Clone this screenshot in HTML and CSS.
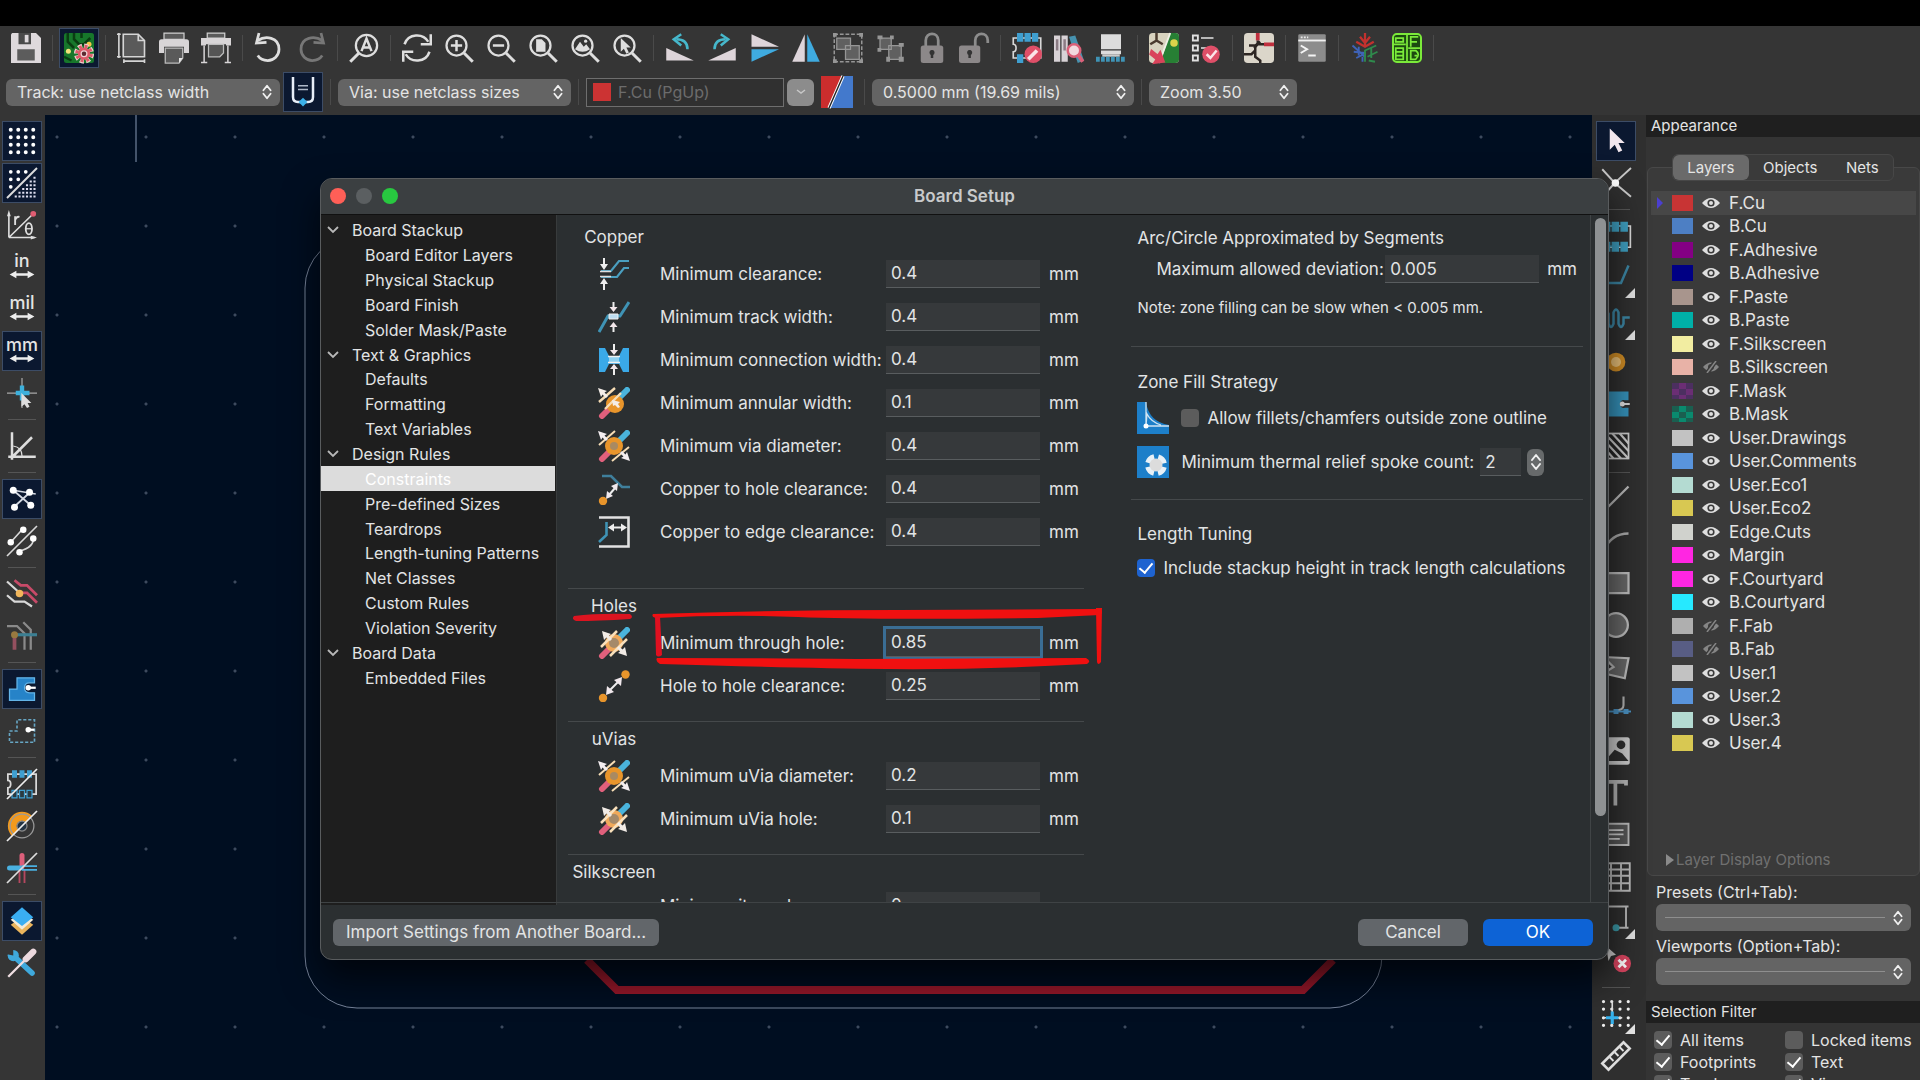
FILE: index.html
```html
<!DOCTYPE html>
<html lang="en">
<head>
<meta charset="utf-8">
<title>PCB Editor - Board Setup</title>
<link rel="stylesheet" href="styles.css">
</head>
<body>
<svg class="defs" width="0" height="0" aria-hidden="true">
  <symbol id="updown" viewBox="0 0 12 20"><path d="M2 8l4-5 4 5M2 12l4 5 4-5" fill="none" stroke="#f0f0f0" stroke-width="2" stroke-linecap="round" stroke-linejoin="round"/></symbol>
  <symbol id="eye" viewBox="0 0 18 12"><path d="M0 6Q9-4 18 6Q9 16 0 6z" fill="#dedede"/><circle cx="9" cy="6" r="3.6" fill="#3a3a3a"/><circle cx="9" cy="6" r="2" fill="#dedede"/></symbol>
  <symbol id="eye-off" viewBox="0 0 18 12"><path d="M1 6Q9-3 17 6Q9 15 1 6z" fill="#858585"/><circle cx="9" cy="6" r="3" fill="#3a3a3a"/><path d="M3 13L13-1M6 13L16-1" stroke="#3a3a3a" stroke-width="2"/><path d="M5 12L14 0" stroke="#858585" stroke-width="1.5"/></symbol>
  <symbol id="lens" viewBox="0 0 24 24"><circle cx="10" cy="10" r="8" fill="none" stroke="#dedede" stroke-width="1.8"/><path d="M16 16l7 7" stroke="#dedede" stroke-width="2.4"/></symbol>
  <symbol id="chev" viewBox="0 0 12 8"><path d="M1 1l5 5 5-5" fill="none" stroke="#b8b8b8" stroke-width="1.8"/></symbol>
  <symbol id="span" viewBox="0 0 24 8"><path d="M1 4l6-3.4v2.2h10V.6L23 4l-6 3.4V5.200H7v2.200z" fill="#ededed"/></symbol>
  <symbol id="via" viewBox="0 0 32 32"><path d="M4 29L12 21" stroke="#e0607c" stroke-width="6" stroke-linecap="round"/><path d="M20 12L29 3" stroke="#4ab4dc" stroke-width="6" stroke-linecap="round"/><circle cx="16" cy="16" r="9" fill="#e8952b"/><circle cx="16" cy="16" r="4" fill="#a98a62"/><path d="M1 15L17 1M14 31L31 17" stroke="#f7ddb5" stroke-width="2"/><path d="M0 1l9 3-2.500 1.500 3.500 3.500-2 2-3.500-3.500L3 10zM32 31l-9-3 2.500-1.500-3.500-3.500 2-2 3.500 3.500L29 22z" fill="#f4eef0"/></symbol>
  <symbol id="hole" viewBox="0 0 32 32"><path d="M4 29L12 21" stroke="#e0607c" stroke-width="6" stroke-linecap="round"/><path d="M20 12L29 3" stroke="#4ab4dc" stroke-width="6" stroke-linecap="round"/><circle cx="16" cy="16" r="9" fill="#f0a95a"/><circle cx="16" cy="16" r="5" fill="#a58a6a"/><path d="M3 20L19 4M12 29L29 12" stroke="#f9e0bb" stroke-width="2.500"/><path d="M4 4l9 3-2 1.500 3 3.500-2 2-3.500-3.500L6 13zM29 29l-9-3 2-1.500-3-3.500 2-2 3.500 3.500L27 20z" fill="#f2ece6"/></symbol>
</svg>

<header class="chrome">
  <div class="bar" role="toolbar" aria-label="Main">
    <button class="tool" aria-label="Save"><svg viewBox="0 0 24 24"><path d="M1 0h19l4 4v20H0V1z" fill="#ded9dc"/><path d="M6 0h10v9H6z" fill="#4a4a4a"/><path d="M11 1.500h3v6h-3z" fill="#ded9dc"/><path d="M5 13h14v9H5z" fill="#5c5c5c"/></svg></button>
    <i class="sep"></i>
    <button class="tool on" aria-label="Board setup"><svg viewBox="0 0 24 24"><rect width="24" height="24" rx="2" fill="#17772b"/><path d="M3 0v7l5 5M8 0v5l4 4h4l5-5M0 19l6 3M14 0v4" stroke="#0a3d12" stroke-width="2" fill="none"/><circle cx="3.500" cy="14.500" r="2" fill="#f3e17a"/><circle cx="20" cy="9" r="2" fill="#f3c54a"/><circle cx="16" cy="16.500" r="5.800" fill="none" stroke="#eed0d2" stroke-width="4.500" stroke-dasharray="3 1.550"/><circle cx="16" cy="16.500" r="5.800" fill="none" stroke="#dc5a68" stroke-width="2.500" stroke-dasharray="2.200 2.350" stroke-dashoffset="-.400"/><circle cx="16" cy="16.500" r="4.900" fill="#dc5a68"/><circle cx="16" cy="16.500" r="2.300" fill="#5c2a30" stroke="#f0d0d4"/></svg></button>
    <i class="sep"></i>
    <button class="tool" aria-label="Page settings"><svg viewBox="0 0 24 24"><path d="M5 1h12l5 5v13H5z" fill="#5a5a5a" stroke="#d5d5d5" stroke-width="1.300"/><path d="M17 1v5h5M1.500 0v20M0 1h3M0 19h3M5 22.500h17M5.500 21v3M22 21v3" stroke="#d5d5d5" stroke-width="1.300" fill="none"/></svg></button>
    <button class="tool" aria-label="Print"><svg viewBox="0 0 24 24"><path d="M4 0h16v5H4z" fill="#5a5a5a" stroke="#cfcfcf"/><path d="M2 5h20q2 0 2 2v9h-4v-5H4v5H0V7q0-2 2-2z" fill="#d8d5d7"/><path d="M5 12h14v8l-3 4H5z" fill="#5a5a5a" stroke="#bcbcbc"/><path d="M16 24v-4h3z" fill="#e6e6e6"/></svg></button>
    <button class="tool" aria-label="Plot"><svg viewBox="0 0 24 24"><path d="M5 0h14v4H5z" fill="#5a5a5a" stroke="#cfcfcf"/><path d="M0 4h24v6h-4v-1H4v1H0z" fill="#d8d5d7"/><path d="M6 9h12v7l-3 3H6z" fill="#555" stroke="#bcbcbc"/><path d="M2.500 10v13M21.500 10v13M0 23.500h5M19 23.500h5" stroke="#d8d5d7" stroke-width="1.200"/></svg></button>
    <i class="sep"></i>
    <button class="tool" aria-label="Undo"><svg viewBox="0 0 24 24"><path d="M3 6C9 2 20 3 20 13c0 5-4 9-9 9-4 0-6-1-8-4" fill="none" stroke="#dedede" stroke-width="2.200"/><path d="M4 0L2 8l8-.5" fill="none" stroke="#dedede" stroke-width="2.200"/></svg></button>
    <button class="tool" aria-label="Redo"><svg viewBox="0 0 24 24"><g transform="matrix(-1 0 0 1 24 0)" fill="none" stroke="#777" stroke-width="2.200"><path d="M3 6C9 2 20 3 20 13c0 5-4 9-9 9-4 0-6-1-8-4M4 0L2 8l8-.5"/></g></svg></button>
    <i class="sep"></i>
    <button class="tool" aria-label="Find"><svg viewBox="0 0 24 24"><circle cx="14" cy="10" r="8.500" fill="none" stroke="#dedede" stroke-width="1.800"/><path d="M8 16l-7 7" stroke="#dedede" stroke-width="2.400"/><path d="M10 14.500L14 4.500l4 10M11.500 11.500h5" fill="none" stroke="#dedede" stroke-width="2"/></svg></button>
    <i class="sep"></i>
    <button class="tool" aria-label="Refresh"><svg viewBox="0 0 24 24"><path d="M2 9C5 0 17 0 21 7M22 15c-3 9-15 9-19 2" fill="none" stroke="#dedede" stroke-width="2"/><path d="M23 1v8h-8M1 23v-8h8" fill="none" stroke="#dedede" stroke-width="2"/></svg></button>
    <button class="tool" aria-label="Zoom in"><svg viewBox="0 0 24 24"><use href="#lens"/><path d="M10 5.500v9M5.500 10h9" stroke="#dedede" stroke-width="2"/></svg></button>
    <button class="tool" aria-label="Zoom out"><svg viewBox="0 0 24 24"><use href="#lens"/><path d="M5.500 10h9" stroke="#dedede" stroke-width="2"/></svg></button>
    <button class="tool" aria-label="Zoom to page"><svg viewBox="0 0 24 24"><use href="#lens"/><path d="M6.500 5h4.500l3 3v7H6.500z" fill="#dedede"/></svg></button>
    <button class="tool" aria-label="Zoom to objects"><svg viewBox="0 0 24 24"><use href="#lens"/><path d="M4 13l4-6 3 4 2-2 3 4q-6 4-12 0z" fill="#dedede"/><circle cx="12.500" cy="6.500" r="1.300" fill="#dedede"/></svg></button>
    <button class="tool" aria-label="Zoom to selection"><svg viewBox="0 0 24 24"><use href="#lens"/><path d="M7 4v11l2.500-2.500 2 4 2-1-2-4H15z" fill="#dedede"/></svg></button>
    <i class="sep"></i>
    <button class="tool" aria-label="Rotate counterclockwise"><svg viewBox="0 0 24 24"><path d="M1 12v10h22z" fill="#ded5da"/><path d="M18 13c0-5-3-8-9-8" fill="none" stroke="#46b8cc" stroke-width="2"/><path d="M13 1L7 5l6 5" fill="none" stroke="#46b8cc" stroke-width="2"/></svg></button>
    <button class="tool" aria-label="Rotate clockwise"><svg viewBox="0 0 24 24"><path d="M23 12v10H1z" fill="#ded5da"/><path d="M6 13c0-5 3-8 9-8" fill="none" stroke="#46b8cc" stroke-width="2"/><path d="M11 1l6 4-6 5" fill="none" stroke="#46b8cc" stroke-width="2"/></svg></button>
    <button class="tool" aria-label="Flip vertically"><svg viewBox="0 0 24 24"><path d="M2 1v10h22z" fill="#ded5da"/><path d="M2 23V13h22z" fill="#3fabe0"/></svg></button>
    <button class="tool" aria-label="Flip horizontally"><svg viewBox="0 0 24 24"><path d="M1 23h10V1z" fill="#ded5da"/><path d="M23 23H13V1z" fill="#3fabe0"/></svg></button>
    <button class="tool" aria-label="Group"><svg viewBox="0 0 24 24"><path d="M1 1h22v22H1z" fill="none" stroke="#969696" stroke-width="1.200" stroke-dasharray="3 1.500"/><path d="M3 4h11v9H3zM10 10h11v11H10z" fill="#606060" stroke="#969696"/><path d="M0 0h3v3H0zM21 0h3v3h-3zM0 21h3v3H0zM21 21h3v3h-3z" fill="#969696"/></svg></button>
    <button class="tool" aria-label="Ungroup"><svg viewBox="0 0 24 24"><path d="M4 4h9v9H4zM11 10h10v11H11z" fill="#606060" stroke="#969696"/><path d="M2 2h4v3H2zM12 2h3v3h-3zM2 12h3v3H2zM19 8h4v3h-4zM9 19h3v4H9zM19 19h4v4h-4z" fill="#969696"/></svg></button>
    <button class="tool" aria-label="Lock"><svg viewBox="0 0 24 24"><path d="M7 11V6c0-7 10-7 10 0v5" fill="none" stroke="#8c8c8c" stroke-width="2.200"/><rect x="3" y="10" width="18" height="14" rx="2" fill="#8c8889"/><path d="M12 14v6" stroke="#333" stroke-width="2"/><circle cx="12" cy="15.500" r="2" fill="#333"/></svg></button>
    <button class="tool" aria-label="Unlock"><svg viewBox="0 0 24 24"><path d="M13 11V6c0-7 10-7 10 0v2" fill="none" stroke="#8c8c8c" stroke-width="2.200"/><rect x="0" y="10" width="17" height="14" rx="2" fill="#8c8889"/><path d="M8.500 14v6" stroke="#333" stroke-width="2"/><circle cx="8.500" cy="15.500" r="2" fill="#333"/></svg></button>
    <i class="sep"></i>
    <button class="tool" aria-label="Footprint editor"><svg viewBox="0 0 24 24"><path d="M1 4h22v16H1v-5c3 0 3-6 0-6z" fill="none" stroke="#d8d8d8" stroke-width="1.300"/><path d="M4 0h5v7H4zM10 0h5v7h-5zM16 0h5v7h-5zM4 17h5v7H4z" fill="#3f9fd0"/><circle cx="17" cy="17" r="7" fill="#df4f68"/><path d="M13 21l7-7" stroke="#fbe4e8" stroke-width="3"/></svg></button>
    <button class="tool" aria-label="Footprint library"><svg viewBox="0 0 24 24"><path d="M0 2h5v21H0zM6 2h5v21H6z" fill="#d8d2d6"/><path d="M1.500 5h2v9h-2zM7.500 5h2v9h-2z" fill="#8b7c84"/><path d="M12 3l5-1 7 20-5 2z" fill="#4793b0"/><circle cx="16" cy="14" r="5" fill="#f2d9df" stroke="#db6078" stroke-width="2"/><path d="M19 17l4 6" stroke="#db6078" stroke-width="3"/></svg></button>
    <button class="tool" aria-label="3D viewer"><svg viewBox="0 0 24 24"><path d="M4 1h16v12H4zM4 14h16v3H4z" fill="#dcdcdc"/><path d="M5 18h14" stroke="#ccc" stroke-width="2"/><path d="M0 21h24" stroke="#3f93b5" stroke-width="4" stroke-dasharray="3 1"/></svg></button>
    <i class="sep"></i>
    <button class="tool" aria-label="Update PCB"><svg viewBox="0 0 24 24"><rect width="24" height="24" rx="3" fill="#d8d3bf"/><path d="M17 0h4q3 0 3 3v18q0 3-3 3H9z" fill="#277f34"/><path d="M17 0L8 24" stroke="#f0f0e6" stroke-width="1.500"/><path d="M6 0v6l-5 3M6 6l5 3" stroke="#4a3b2e" stroke-width="2" fill="none"/><circle cx="20" cy="8" r="3" fill="#dcd34b"/><path d="M2 14l5 4 2-3 3 8-8 1 2-3-5-4z" fill="#d9445b" stroke="#d9445b" stroke-width="1.500"/></svg></button>
    <button class="tool" aria-label="Design rules check"><svg viewBox="0 0 24 24"><path d="M1.500 2h4v4h-4zM1.500 10h4v4h-4zM1.500 18h4v4h-4z" fill="none" stroke="#e0e0e0" stroke-width="1.500"/><path d="M8 4h10M8 12h5" stroke="#b8b8b8" stroke-width="1.500"/><circle cx="16" cy="17" r="7" fill="#df4f68"/><path d="M12.500 17l3 3 5-6" fill="none" stroke="#fbe4e8" stroke-width="2"/></svg></button>
    <i class="sep"></i>
    <button class="tool" aria-label="Schematic editor"><svg viewBox="0 0 24 24"><rect width="24" height="24" rx="3" fill="#dbd6ca"/><path d="M0 17h6l3-3v-4l4-3M9 14v5l4 3v2M9 10H4" stroke="#2c2522" stroke-width="2" fill="none"/><path d="M11 0v6M16 9h8" stroke="#c0303f" stroke-width="3" fill="none"/><path d="M11 6v3l-3 3M11 9h5" stroke="#2c2522" stroke-width="2" fill="none"/></svg></button>
    <i class="sep"></i>
    <button class="tool" aria-label="Scripting console"><svg viewBox="0 0 24 24"><rect x="1" y="1" width="22" height="22" rx="1" fill="#8c8c8c"/><path d="M1 6h22" stroke="#f0f0f0" stroke-width="1.500"/><path d="M3 3.500h6" stroke="#e8e8e8" stroke-width="1.500" stroke-dasharray="1.500 1"/><path d="M3 10l5 3-5 3M9 18h6" fill="none" stroke="#f4f4f4" stroke-width="1.600"/></svg></button>
    <i class="sep"></i>
    <button class="tool" aria-label="Plugin"><svg viewBox="0 0 24 24"><path d="M12 0v10M8 3l4 5 4-5M5 7l7 4 7-4" stroke="#c3312e" stroke-width="1.800" fill="none"/><path d="M2 10l10 9M3 15l9 1M7 11v7M10 19v4M5 20l6-3" stroke="#3f63b8" stroke-width="1.500" fill="none"/><path d="M12 23v-9l9-4M14 19l8-4M17 12v8M15 22l5 1" stroke="#2f8a4c" stroke-width="1.500" fill="none"/></svg></button>
    <button class="tool" aria-label="Bill of materials"><svg viewBox="0 0 24 24"><rect x=".8" y=".8" width="22.400" height="22.400" rx="3" fill="#1c4a10" stroke="#7bea3a" stroke-width="1.600"/><path d="M12 1v22M1 9h10M13 12h10M3 4h6v3H3zM3 12h6v9H3zM3 15h6M3 18h6M15 11V3h6M15 7h5M15 14h4q4 3 0 7h-4zM18 18h2" stroke="#7bea3a" stroke-width="1.400" fill="none"/></svg></button>
    <i class="sep"></i>
  </div>
  <div class="bar options">
    <span class="pick track"><select aria-label="Track width"><option>Track: use netclass width</option></select><svg><use href="#updown"/></svg></span>
    <button class="tool on" aria-label="Auto track width"><svg viewBox="0 0 24 24"><path d="M4 0v16q0 4 4 4h8q4 0 4-4V0" fill="none" stroke="#e8eef8" stroke-width="2"/><path d="M8 7h8M8 10h8" stroke="#aeb8c8" stroke-width="1.300"/><path d="M12 16.500l3.500 3.500-3.500 3.500L8.500 20z" fill="#3cb0e8"/></svg></button>
    <i class="sep"></i>
    <span class="pick via"><select aria-label="Via size"><option>Via: use netclass sizes</option></select><svg><use href="#updown"/></svg></span>
    <i class="sep"></i>
    <span class="layerbox"><i class="chip"></i><input aria-label="Active layer" value="F.Cu (PgUp)" disabled></span>
    <button class="drop" aria-label="Choose layer"><svg viewBox="0 0 12 8"><path d="M2 2l4 3 4-3" fill="none" stroke="#c8c8c8" stroke-width="1.500"/></svg></button>
    <button class="tool" aria-label="Layer pair"><svg class="pair" viewBox="0 0 24 24"><path d="M0 0h17L6 24H0z" fill="#cc2d2d"/><path d="M17 0h7v24H6z" fill="#4379cc"/><path d="M16.500 0L6 24" stroke="#fff" stroke-width="2.400"/><path d="M16.500 0L6 24" stroke="#222"/></svg></button>
    <i class="sep"></i>
    <span class="pick grid"><select aria-label="Grid"><option>0.5000 mm (19.69 mils)</option></select><svg><use href="#updown"/></svg></span>
    <i class="sep"></i>
    <span class="pick zoom"><select aria-label="Zoom"><option>Zoom 3.50</option></select><svg><use href="#updown"/></svg></span>
  </div>
</header>

<main class="workspace">
  <div class="side" role="toolbar" aria-label="Display">
    <button class="tool on" aria-label="Show grid"><svg viewBox="0 0 24 24"><path d="M3 3h20M3 9h20M3 15h20M3 21h20" stroke="#fff" stroke-width="3.200" stroke-linecap="round" stroke-dasharray="0 6"/></svg></button>
    <button class="tool on" aria-label="Grid overrides"><svg viewBox="0 0 24 24"><path d="M3 3h13M3 9h7M3 15h1" stroke="#fff" stroke-width="3" stroke-linecap="round" stroke-dasharray="0 6"/><path d="M0 24L24 0" stroke="#ddd" stroke-width="1.500"/><path d="M22 7v17M19 10v14M16 13v11M13 16v8M10 19v5M7 22v2" stroke="#dde" stroke-width="1.700" stroke-dasharray="1.600 1.400"/></svg></button>
    <button class="tool" aria-label="Polar coordinates"><svg viewBox="0 0 24 24"><path d="M1.500 22V3M1.500 22H22M1.500 22L21 3" stroke="#dedede" stroke-width="1.300"/><path d="M0 5l1.500-5L3 5zM19 20.500l5 1.500-5 1.500z" fill="#dedede"/><circle cx="21" cy="3" r="2.300" fill="#df5d72"/><path d="M6.500 12V5M6.500 8q1-3 3.500-2.500" stroke="#dedede" stroke-width="1.500" fill="none"/><ellipse cx="17.500" cy="15" rx="2.500" ry="4.500" fill="none" stroke="#dedede" stroke-width="1.500"/><path d="M15 15h5" stroke="#dedede"/></svg></button>
    <button class="tool unit">in<svg><use href="#span"/></svg></button>
    <button class="tool unit">mil<svg><use href="#span"/></svg></button>
    <button class="tool unit on">mm<svg><use href="#span"/></svg></button>
    <button class="tool" aria-label="Cursor shape"><svg viewBox="0 0 24 24"><path d="M12 0v24M0 12h24" stroke="#a8a8a8" stroke-width="1"/><path d="M12 6v12M7 12h11" stroke="#3cb0dc" stroke-width="3.500"/><path d="M11.500 12v11l2.500-2 2 3 2-1-1.500-3h3z" fill="#ddd"/></svg></button>
    <i class="sep"></i>
    <button class="tool" aria-label="Angle snap"><svg viewBox="0 0 24 24"><path d="M4 1v22M1 20.500h22M3 22L20 5" stroke="#dedede" stroke-width="2"/><path d="M5 12q7 1 7 8" stroke="#dedede" fill="none"/></svg></button>
    <i class="sep"></i>
    <button class="tool on" aria-label="Ratsnest"><svg viewBox="0 0 24 24"><path d="M5 5l18 3M5 5l14 12M6 18L18 7" stroke="#d5d9e2" stroke-width="1.400"/><g fill="#fff"><circle cx="5" cy="5" r="2.800"/><circle cx="18" cy="6.500" r="2.800"/><circle cx="6" cy="18.500" r="2.800"/><circle cx="19" cy="17" r="2.800"/></g></svg></button>
    <button class="tool" aria-label="Curved ratsnest"><svg viewBox="0 0 24 24"><path d="M0 24L24 0M3 13L12 3M21 9q1 8-11 11" stroke="#d8d8d8" stroke-width="1.300" fill="none"/><g fill="#fff"><circle cx="3" cy="13" r="2.600"/><circle cx="13" cy="3" r="2.600"/><circle cx="21" cy="10" r="2.600"/><circle cx="10" cy="21" r="2.600"/></g></svg></button>
    <i class="sep"></i>
    <button class="tool" aria-label="Net highlight"><svg viewBox="0 0 24 24"><path d="M0 2l10 9M0 13l6 5h8l6 4" stroke="#d8d8d8" stroke-width="1.800" fill="none"/><path d="M6 1l5 4h5l8 8M10 11h6l8 8" stroke="#c74a68" stroke-width="2.200" fill="none"/><circle cx="10" cy="11.500" r="3" fill="#f1b65a"/></svg></button>
    <button class="tool" aria-label="Net colors"><svg viewBox="0 0 24 24"><path d="M0 4h8l6 6v13M13 1l6 6v16" stroke="#8a8a8a" stroke-width="1.800" fill="none"/><path d="M6 12v11" stroke="#94505f" stroke-width="3"/><path d="M8 11h16" stroke="#3c7f93" stroke-width="2.500"/><circle cx="6" cy="11" r="2.800" fill="#99793f"/></svg></button>
    <i class="sep"></i>
    <button class="tool on" aria-label="Show zone fill"><svg viewBox="0 0 24 24"><path d="M2 12h6V3h14v4h-4q-4 0-4 4t4 4h4v6H2z" fill="#2683c8" stroke="#63b4e8"/><circle cx="17" cy="11" r="2.200" fill="#fff"/><path d="M17 11h6" stroke="#fff" stroke-width="1.800"/></svg></button>
    <button class="tool" aria-label="Show zone outlines"><svg viewBox="0 0 24 24"><path d="M2 12h6V3h14v18H2z" fill="none" stroke="#67a6c4" stroke-width="1.300" stroke-dasharray="2.500 1.500"/><circle cx="17" cy="11" r="2.200" fill="#fff"/><path d="M17 11h5" stroke="#fff" stroke-width="1.800"/></svg></button>
    <i class="sep"></i>
    <button class="tool" aria-label="Footprint outlines"><svg viewBox="0 0 24 24"><path d="M.700 4h22.600v16H.700v-5c3 0 3-6 0-6z" fill="none" stroke="#d8d8d8" stroke-width="1.400"/><path d="M4 1h4v6H4zM10 1h4v6h-4zM16 1h4v6h-4z" fill="#3f9fd0"/><path d="M4 17h4v6H4zM10 17h4v6h-4zM16 17h4v6h-4z" fill="#2b3a40" stroke="#3f9fd0"/><path d="M0 24L24 0" stroke="#eee" stroke-width="1.400"/></svg></button>
    <button class="tool" aria-label="Via outlines"><svg viewBox="0 0 24 24"><path d="M4 20A10 10 0 0 1 20 4L15 9a4 4 0 0 0-6 6z" fill="#f39a1d"/><circle cx="12" cy="12" r="9.500" fill="none" stroke="#9a9a9a"/><circle cx="12" cy="12" r="4" fill="#243444" stroke="#888"/><path d="M0 24L24 0" stroke="#eee" stroke-width="1.400"/></svg></button>
    <button class="tool" aria-label="Track outlines"><svg viewBox="0 0 24 24"><path d="M12 2v9" stroke="#dc5f7a" stroke-width="4" stroke-linecap="round"/><path d="M10 13v11M14 13v11" stroke="#b5475f" stroke-width="1.500"/><path d="M2 12h9" stroke="#4ab0e0" stroke-width="4" stroke-linecap="round"/><path d="M12 10.500h12M12 13.500h12" stroke="#4ab0e0" stroke-width="1.300"/><path d="M0 24L24 0" stroke="#ddd" stroke-width="1.400"/></svg></button>
    <i class="sep"></i>
    <button class="tool on" aria-label="Appearance panel"><svg viewBox="0 0 24 24"><path d="M3 15l9-6 9 6-9 8z" fill="#eab45c"/><path d="M3 11l9-6 9 6-9 8z" fill="#f2ead8"/><path d="M3 9l9-8 9 8-9 7z" fill="#3aaef2"/></svg></button>
    <button class="tool" aria-label="Preferences"><svg viewBox="0 0 24 24"><path d="M6 7l14 13" stroke="#3fa9dc" stroke-width="4.500" stroke-linecap="round"/><circle cx="5" cy="6" r="4.500" fill="#3fa9dc"/><path d="M0 0h5v6l-5-1z" fill="#353535"/><path d="M1 23L15 9" stroke="#f0dfe3" stroke-width="1.800"/><path d="M15 9l6-6" stroke="#ecd9de" stroke-width="5" stroke-linecap="round"/></svg></button>
  </div>

  <div class="canvas">
    <svg class="board" aria-label="Board outline and tracks">
      <path d="M91 0v47" stroke="#43536a" stroke-width="2"/>
      <rect x="260" y="121" width="1077" height="772" rx="52" fill="none" stroke="#77839a"/>
      <path d="M542 845l30 30h686l30-30" fill="none" stroke="#951729" stroke-width="8"/>
    </svg>
  </div>

  <div class="side right" role="toolbar" aria-label="Drawing">
    <button class="tool on" aria-label="Select"><svg viewBox="0 0 24 24"><path d="M7 2v17l4-4 3 6 3-1.500-3-6h5z" fill="#f2e7ee"/></svg></button>
    <button class="tool" aria-label="Local ratsnest"><svg viewBox="0 0 24 24"><path d="M1 1l10 11L24 0M11 12l13 11M11 12L2 22" stroke="#c8c8c8" stroke-width="1.500" fill="none"/><circle cx="11.500" cy="12" r="3" fill="#fff"/></svg></button>
    <i class="sep"></i>
    <button class="tool" aria-label="Place footprint"><svg viewBox="0 0 24 24"><path d="M1 4h22.500v17H1" fill="none" stroke="#d8d8d8" stroke-width="1.300"/><path d="M3 1h4v7H3zM9 1h5v7H9zM16 1h5v7h-5zM3 17h4v7H3zM9 17h5v7H9zM16 17h5v7h-5zM3 4h18M3 20h18" fill="#3f9fc0" stroke="#3f9fc0"/></svg></button>
    <button class="tool more" aria-label="Route tracks"><svg viewBox="0 0 24 24"><path d="M2 16h14L22 2" fill="none" stroke="#3c86a4" stroke-width="2"/></svg></button>
    <button class="tool more" aria-label="Tune length"><svg viewBox="0 0 24 24"><path d="M2 15V7q2-5 4 0v8q2 5 4 0V6q2-5 4 0v9q2 5 4 0v-5h5" fill="none" stroke="#3c86a4" stroke-width="2"/></svg></button>
    <button class="tool" aria-label="Add via"><svg viewBox="0 0 24 24"><circle cx="12" cy="12" r="7.500" fill="#cf8c25"/><circle cx="12" cy="12" r="4" fill="#e8bf78"/></svg></button>
    <button class="tool" aria-label="Add zone"><svg viewBox="0 0 24 24"><path d="M2 2h20v7h-3q-3-1-4 3 1 4 4 3h3v7H2z" fill="#3590b8"/><circle cx="17" cy="12" r="2" fill="#ddd"/><path d="M17 12h6" stroke="#ddd" stroke-width="1.500"/></svg></button>
    <button class="tool" aria-label="Add rule area"><svg viewBox="0 0 24 24"><rect x="3" y="2" width="19" height="20" fill="#262626" stroke="#ccc" stroke-width="1.400"/><path d="M3 2l19 20M9 2l13 14M15 2l7 8M3 8l13 14M3 14l7 8" stroke="#ccc" stroke-width="1.700"/></svg></button>
    <i class="sep"></i>
    <button class="tool" aria-label="Draw line"><svg viewBox="0 0 24 24"><path d="M2 22L22 2" stroke="#bbb" stroke-width="1.800"/></svg></button>
    <button class="tool" aria-label="Draw arc"><svg viewBox="0 0 24 24"><path d="M2 20Q8 6 22 6" fill="none" stroke="#aaa" stroke-width="2"/></svg></button>
    <button class="tool" aria-label="Draw rectangle"><svg viewBox="0 0 24 24"><path d="M2 4h20v16H2z" fill="#666" stroke="#bbb" stroke-width="1.800"/></svg></button>
    <button class="tool" aria-label="Draw circle"><svg viewBox="0 0 24 24"><circle cx="12" cy="12" r="9.500" fill="#666" stroke="#bbb" stroke-width="1.800"/></svg></button>
    <button class="tool" aria-label="Draw polygon"><svg viewBox="0 0 24 24"><path d="M2 4l20 1-3 16-17-4 8-5z" fill="#666" stroke="#bbb" stroke-width="1.800"/></svg></button>
    <button class="tool" aria-label="Draw curve"><svg viewBox="0 0 24 24"><path d="M18 2v7q0 4-6 4" fill="none" stroke="#b0b0b0" stroke-width="1.700"/><path d="M2 14h22" stroke="#4a90c0" stroke-width="1.500"/><path d="M10 12h4v4h-4zM18 12h4v4h-4z" fill="#4a90c0"/></svg></button>
    <button class="tool" aria-label="Add image"><svg viewBox="0 0 24 24"><rect x="1" y="1" width="22" height="22" rx="2" fill="#c9c9c9"/><circle cx="16" cy="7" r="3.500" fill="#2e2e2e"/><path d="M3 20l8-9 6 3 5 6z" fill="#2e2e2e"/></svg></button>
    <button class="tool" aria-label="Add text"><svg viewBox="0 0 24 24"><path d="M3 3h17v3M11.500 3v19M3 6V3" fill="none" stroke="#b5b5b5" stroke-width="3"/></svg></button>
    <button class="tool" aria-label="Add text box"><svg viewBox="0 0 24 24"><path d="M2 3h20v17H2z" fill="#555" stroke="#bbb" stroke-width="1.500"/><path d="M5 8h13M5 11.500h13M5 15h10" stroke="#ccc" stroke-width="1.400"/></svg></button>
    <button class="tool" aria-label="Add table"><svg viewBox="0 0 24 24"><path d="M1 1h22v22H1zM1 6h22M1 11h22M1 17h22M8 1v22M16 1v22" fill="none" stroke="#bbb" stroke-width="1.500"/></svg></button>
    <button class="tool more" aria-label="Add dimension"><svg viewBox="0 0 24 24"><path d="M2 2h20M20 2v17M12 19h10" stroke="#bbb" stroke-width="1.500" fill="none"/><circle cx="12" cy="19" r="2.800" fill="#3c9aa8"/></svg></button>
    <button class="tool" aria-label="Delete"><svg viewBox="0 0 24 24"><path d="M4 0l8 7-4 1-2 4z" fill="#ccc"/><circle cx="17" cy="14" r="7" fill="#d94560"/><path d="M14 11l6 6M20 11l-6 6" stroke="#fff" stroke-width="2.200"/></svg></button>
    <i class="sep"></i>
    <button class="tool more" aria-label="Grid origin"><svg viewBox="0 0 24 24"><path d="M2 2h20M2 8h20M2 15h20M2 21h20" stroke="#eee" stroke-width="2.600" stroke-linecap="round" stroke-dasharray="0 6.600"/><path d="M9 2v20M3 15h14" stroke="#ddd" stroke-width="1.300"/><path d="M9 10v10M4 15h10" stroke="#35b0ea" stroke-width="2.500"/></svg></button>
    <button class="tool" aria-label="Measure"><svg viewBox="0 0 24 24"><path d="M1 18L18 1l5 5L6 23z" fill="none" stroke="#dedede" stroke-width="2"/><path d="M7 13l3 3M11 9l3 3M15 5l3 3" stroke="#dedede" stroke-width="1.500"/></svg></button>
  </div>

  <aside class="panel">
    <h2 class="caption">Appearance</h2>
    <div class="tabs" role="tablist"><button class="tab current" role="tab">Layers</button><button class="tab" role="tab">Objects</button><button class="tab" role="tab">Nets</button></div>
    <div class="group">
      <ul class="layers">
        <li class="active"><i class="chip fcu"></i><button aria-label="Toggle"><svg><use href="#eye"/></svg></button>F.Cu</li>
        <li><i class="chip bcu"></i><button aria-label="Toggle"><svg><use href="#eye"/></svg></button>B.Cu</li>
        <li><i class="chip fadh"></i><button aria-label="Toggle"><svg><use href="#eye"/></svg></button>F.Adhesive</li>
        <li><i class="chip badh"></i><button aria-label="Toggle"><svg><use href="#eye"/></svg></button>B.Adhesive</li>
        <li><i class="chip fpaste"></i><button aria-label="Toggle"><svg><use href="#eye"/></svg></button>F.Paste</li>
        <li><i class="chip bpaste"></i><button aria-label="Toggle"><svg><use href="#eye"/></svg></button>B.Paste</li>
        <li><i class="chip fsilk"></i><button aria-label="Toggle"><svg><use href="#eye"/></svg></button>F.Silkscreen</li>
        <li><i class="chip bsilk"></i><button aria-label="Toggle"><svg><use href="#eye-off"/></svg></button>B.Silkscreen</li>
        <li><i class="chip fmask"></i><button aria-label="Toggle"><svg><use href="#eye"/></svg></button>F.Mask</li>
        <li><i class="chip bmask"></i><button aria-label="Toggle"><svg><use href="#eye"/></svg></button>B.Mask</li>
        <li><i class="chip gray"></i><button aria-label="Toggle"><svg><use href="#eye"/></svg></button>User.Drawings</li>
        <li><i class="chip blue"></i><button aria-label="Toggle"><svg><use href="#eye"/></svg></button>User.Comments</li>
        <li><i class="chip mint"></i><button aria-label="Toggle"><svg><use href="#eye"/></svg></button>User.Eco1</li>
        <li><i class="chip gold"></i><button aria-label="Toggle"><svg><use href="#eye"/></svg></button>User.Eco2</li>
        <li><i class="chip edge"></i><button aria-label="Toggle"><svg><use href="#eye"/></svg></button>Edge.Cuts</li>
        <li><i class="chip pink"></i><button aria-label="Toggle"><svg><use href="#eye"/></svg></button>Margin</li>
        <li><i class="chip pink"></i><button aria-label="Toggle"><svg><use href="#eye"/></svg></button>F.Courtyard</li>
        <li><i class="chip cyan"></i><button aria-label="Toggle"><svg><use href="#eye"/></svg></button>B.Courtyard</li>
        <li><i class="chip ffab"></i><button aria-label="Toggle"><svg><use href="#eye-off"/></svg></button>F.Fab</li>
        <li><i class="chip bfab"></i><button aria-label="Toggle"><svg><use href="#eye-off"/></svg></button>B.Fab</li>
        <li><i class="chip gray"></i><button aria-label="Toggle"><svg><use href="#eye"/></svg></button>User.1</li>
        <li><i class="chip blue"></i><button aria-label="Toggle"><svg><use href="#eye"/></svg></button>User.2</li>
        <li><i class="chip mint"></i><button aria-label="Toggle"><svg><use href="#eye"/></svg></button>User.3</li>
        <li><i class="chip gold"></i><button aria-label="Toggle"><svg><use href="#eye"/></svg></button>User.4</li>
      </ul>
      <button class="reveal"><svg viewBox="0 0 8 12"><path d="M0 0l8 6-8 6z" fill="#8a8a8a"/></svg>Layer Display Options</button>
    </div>
    <div class="views">
      <label for="presets">Presets (Ctrl+Tab):</label>
      <span class="pick blank"><select id="presets"><option></option></select><hr><svg><use href="#updown"/></svg></span>
      <label for="viewports">Viewports (Option+Tab):</label>
      <span class="pick blank"><select id="viewports"><option></option></select><hr><svg><use href="#updown"/></svg></span>
    </div>
    <h2 class="caption">Selection Filter</h2>
    <div class="filter">
      <label><input type="checkbox" checked>All items</label>
      <label><input type="checkbox">Locked items</label>
      <label><input type="checkbox" checked>Footprints</label>
      <label><input type="checkbox" checked>Text</label>
      <label><input type="checkbox" checked>Tracks</label>
      <label><input type="checkbox" checked>Vias</label>
    </div>
  </aside>
</main>

<section class="dialog" role="dialog" aria-labelledby="dlg-title">
  <header class="titlebar">
    <span class="lights"><button class="close" aria-label="Close"></button><button class="min" aria-label="Minimize" disabled></button><button class="max" aria-label="Zoom"></button></span>
    <h1 id="dlg-title">Board Setup</h1>
  </header>
  <div class="pages">
    <nav class="tree">
      <a href="#stackup" class="branch"><svg><use href="#chev"/></svg>Board Stackup</a>
      <a href="#layers">Board Editor Layers</a>
      <a href="#physical">Physical Stackup</a>
      <a href="#finish">Board Finish</a>
      <a href="#mask">Solder Mask/Paste</a>
      <a href="#text" class="branch"><svg><use href="#chev"/></svg>Text &amp; Graphics</a>
      <a href="#defaults">Defaults</a>
      <a href="#formatting">Formatting</a>
      <a href="#variables">Text Variables</a>
      <a href="#rules" class="branch"><svg><use href="#chev"/></svg>Design Rules</a>
      <a href="#constraints" class="selected">Constraints</a>
      <a href="#sizes">Pre-defined Sizes</a>
      <a href="#teardrops">Teardrops</a>
      <a href="#tuning">Length-tuning Patterns</a>
      <a href="#classes">Net Classes</a>
      <a href="#custom">Custom Rules</a>
      <a href="#severity">Violation Severity</a>
      <a href="#data" class="branch"><svg><use href="#chev"/></svg>Board Data</a>
      <a href="#files">Embedded Files</a>
    </nav>
    <div class="form">
      <div class="col rules">
        <section class="copper">
          <h3>Copper</h3>
          <div class="rule"><svg viewBox="0 0 32 32"><path d="M3 13h10l8-10h10M3 19h16l7-9h5" fill="none" stroke="#4a9fc0" stroke-width="2.200"/><path d="M2 13.500h11M2 18.500h11" stroke="#ddd" stroke-width="1.500"/><path d="M6 0v7M6 32v-7" stroke="#eee" stroke-width="2"/><path d="M2 6h8l-4 6zM2 26h8l-4-6z" fill="#eee"/></svg><label for="clr">Minimum clearance:</label><input id="clr" value="0.4"><span>mm</span></div>
          <div class="rule"><svg viewBox="0 0 32 32"><path d="M1 31L10 15h12L31 1" fill="none" stroke="#3f93b5" stroke-width="3"/><path d="M11 13h9v5h-9z" fill="#bcdcf0" stroke="#eee"/><path d="M15.500 1v7M15.500 31v-7" stroke="#eee" stroke-width="2"/><path d="M11.500 6h8l-4 5zM11.500 26h8l-4-5z" fill="#f2e6ea"/></svg><label for="trk">Minimum track width:</label><input id="trk" value="0.4"><span>mm</span></div>
          <div class="rule"><svg viewBox="0 0 32 32"><path d="M1 4h6l4 8h10l4-8h6v24h-6l-4-8H11l-4 8H1z" fill="#3aa9e8"/><path d="M11 13h10v5H11z" fill="#8fd0f0"/><path d="M10 12.500h12M10 18.500h12" stroke="#f0f0f0" stroke-width="1.500"/><path d="M16 0v7M16 31v-7" stroke="#eee" stroke-width="2"/><path d="M12 6h8l-4 5zM12 25h8l-4-5z" fill="#f2e6ea"/></svg><label for="con">Minimum connection width:</label><input id="con" value="0.4"><span>mm</span></div>
          <div class="rule"><svg viewBox="0 0 32 32"><path d="M4 29L12 21" stroke="#e0607c" stroke-width="6" stroke-linecap="round"/><path d="M20 12L29 3" stroke="#4ab4dc" stroke-width="6" stroke-linecap="round"/><circle cx="17" cy="17" r="9" fill="#e8952b"/><path d="M1 15L17 1M7 22L23 6" stroke="#f7ddb5" stroke-width="2.400"/><path d="M0 1l9 3-2.500 1.500 3.500 3.500-2 2-3.500-3.500L3 10zM14 13l8 2-2 2 2 3-2 1-3-3-2 1z" fill="#f4ede8"/></svg><label for="ann">Minimum annular width:</label><input id="ann" value="0.1"><span>mm</span></div>
          <div class="rule"><svg><use href="#via"/></svg><label for="dia">Minimum via diameter:</label><input id="dia" value="0.4"><span>mm</span></div>
          <div class="rule"><svg viewBox="0 0 32 32"><path d="M4 3h9l11 11h8" fill="none" stroke="#3f7f9c" stroke-width="2.600"/><path d="M11 22l6-7" stroke="#eee" stroke-width="2"/><path d="M20 10l-1 8-6-5zM8 26l1-8 6 5z" fill="#f0e8ec"/><circle cx="5" cy="28" r="4.200" fill="#e8952b"/></svg><label for="c2h">Copper to hole clearance:</label><input id="c2h" value="0.4"><span>mm</span></div>
          <div class="rule"><svg viewBox="0 0 32 32"><path d="M1 1.500h29.500v29H1" fill="none" stroke="#e2e2e2" stroke-width="2.600"/><path d="M8.500 6v13L1 26" fill="none" stroke="#3f93b5" stroke-width="2.600"/><path d="M14 11.500h11" stroke="#eee" stroke-width="2"/><path d="M10 11.500l6-4v8zM29 11.500l-6-4v8z" fill="#eee"/></svg><label for="c2e">Copper to edge clearance:</label><input id="c2e" value="0.4"><span>mm</span></div>
        </section>
        <section class="holes">
          <h3>Holes</h3>
          <div class="rule"><svg><use href="#hole"/></svg><label for="thr">Minimum through hole:</label><input id="thr" class="focused" value="0.85"><span>mm</span></div>
          <div class="rule"><svg viewBox="0 0 32 32"><path d="M11 21L21 11" stroke="#eee" stroke-width="2"/><path d="M24 7l-1 9-7-6zM8 25l1-9 7 6z" fill="#f0e8ec"/><circle cx="5" cy="28" r="4.200" fill="#e8952b"/><circle cx="27.500" cy="4.500" r="4.200" fill="#e8952b"/></svg><label for="h2h">Hole to hole clearance:</label><input id="h2h" value="0.25"><span>mm</span></div>
          <svg class="marker" viewBox="0 0 540 60" aria-hidden="true"><g fill="#f01010"><path d="M6 10Q30 7 62 8q4 3 0 5Q30 15 8 15q-5-2-2-5z" fill="#dc1420"/><path d="M85 8Q200 4 330 4L532 3q4 3 0 6L470 12Q300 14 230 11T88 12q-5-1-3-4z"/><path d="M87 10h5l2 39q-4 3-6 0z" fill="#e01020"/><path d="M89 52q80 0 200 1l229-1q6 3 1 6-110 6-200 5T92 58q-5-3-3-6z"/><path d="M528 2h6l-1 54q-3 4-4 0z"/></g></svg>
        </section>
        <section>
          <h3>uVias</h3>
          <div class="rule"><svg><use href="#via"/></svg><label for="uvd">Minimum uVia diameter:</label><input id="uvd" value="0.2"><span>mm</span></div>
          <div class="rule"><svg><use href="#hole"/></svg><label for="uvh">Minimum uVia hole:</label><input id="uvh" value="0.1"><span>mm</span></div>
        </section>
        <section class="silk">
          <h3>Silkscreen</h3>
          <div class="rule"><i></i><label for="silk">Minimum item clearance:</label><input id="silk" value="0"><span>mm</span></div>
        </section>
      </div>
      <div class="col misc">
        <section class="arc">
          <h3>Arc/Circle Approximated by Segments</h3>
          <div class="line indent"><label for="dev">Maximum allowed deviation:</label><input id="dev" value="0.005"><span>mm</span></div>
          <p>Note: zone filling can be slow when &lt; 0.005 mm.</p>
        </section>
        <section class="zone">
          <h3>Zone Fill Strategy</h3>
          <div class="line"><svg viewBox="0 0 32 32"><path d="M0 0h9q3 20 23 23v9H0z" fill="#1d7fc9"/><path d="M9 0v24h23M9 24L10 12q4 8 14 11" fill="none" stroke="#cfe4f2" stroke-width="1.300"/><circle cx="9" cy="24" r="2.500" fill="#fff"/></svg><label><input type="checkbox">Allow fillets/chamfers outside zone outline</label></div>
          <div class="line"><svg viewBox="0 0 32 32"><path d="M0 0h32v32H0z" fill="#1d7fc9"/><circle cx="19" cy="19" r="8" fill="none" stroke="#e9f1f7" stroke-width="6" stroke-dasharray="8.500 4.060" stroke-dashoffset="-2"/><circle cx="19" cy="19" r="6.500" fill="#dcdcdc"/></svg><label for="spokes">Minimum thermal relief spoke count:</label><input id="spokes" class="small" value="2"><button class="stepper" aria-label="Step"><svg><use href="#updown"/></svg></button></div>
        </section>
        <section class="tuning">
          <h3>Length Tuning</h3>
          <label><input type="checkbox" class="accent" checked>Include stackup height in track length calculations</label>
        </section>
      </div>
    </div>
    <div class="scroll"><i class="thumb"></i></div>
  </div>
  <footer class="actions">
    <button>Import Settings from Another Board...</button>
    <button class="wide push">Cancel</button>
    <button class="wide primary">OK</button>
  </footer>
</section>
</body>
</html>
```
FILE: styles.css
```css
* { box-sizing: border-box; }
body {
  margin: 0;
  height: 100vh;
  overflow: hidden;
  position: relative;
  display: flex;
  flex-direction: column;
  padding-top: 26px;
  background: #000;
  color: #e4e4e4;
  font: 17px/20px Inter, "Liberation Sans", sans-serif;
}
button, input, select { font: inherit; color: inherit; border: 0; margin: 0; padding: 0; background: none; }
h1, h2, h3, p, ul { margin: 0; padding: 0; font-size: 17px; font-weight: 400; }
i { display: block; flex: none; }
svg { display: block; flex: none; }
.defs { position: absolute; }

/* top toolbars */
.chrome { display: flex; flex-direction: column; gap: 4px; padding: 2px 6px 3px; background: #353535; }
.bar { display: flex; align-items: center; gap: 2px; height: 40px; }
.options { gap: 3px; }
.tool { position: relative; flex: none; width: 40px; height: 40px; display: flex; flex-direction: column; align-items: center; justify-content: center; border: 1px solid transparent; }
.tool svg { width: 30px; height: 30px; overflow: visible; }
.tool.on { background: #0b1830; border-color: #3c4c66; }
.bar .sep { width: 9px; height: 26px; background: linear-gradient(#4a4a4a, #4a4a4a) center / 1px 100% no-repeat; }
.pick { display: grid; align-items: center; height: 27px; border-radius: 6px; background: #646464; }
.pick select { grid-area: 1 / 1; width: 100%; height: 27px; padding: 0 11px; appearance: none; outline: none; }
.pick svg { grid-area: 1 / 1; justify-self: end; width: 12px; height: 18px; margin-right: 7px; pointer-events: none; }
.pick hr { grid-area: 1 / 1; width: 220px; margin: 0 0 0 9px; border: 0; border-top: 1px solid #8e8e8e; }
.options .pick { font-size: 16px; }
.track { width: 274px; }
.via { width: 233px; }
.grid { width: 262px; }
.zoom { width: 148px; }
.layerbox { display: flex; align-items: center; gap: 7px; width: 198px; height: 29px; padding-left: 6px; border: 1px solid #6e6e6e; background: #303030; }
.layerbox input { width: 150px; font-size: 16px; color: #6c6c6c; }
.layerbox .chip { width: 18px; height: 18px; background: #cc3333; }
.drop { display: grid; place-items: center; width: 27px; height: 27px; border-radius: 6px; background: #8c8c8c; }
.drop svg { width: 12px; height: 8px; }
.tool .pair { width: 32px; height: 32px; }

/* workspace */
.workspace { flex: 1; min-height: 0; display: flex; }
.side { flex: none; display: flex; flex-direction: column; gap: 2px; width: 45px; padding: 6px 0 0 2px; background: #353535; overflow: hidden; }
.side .sep { width: 40px; height: 9px; background: linear-gradient(#555, #555) center / 28px 1px no-repeat; }
.unit { padding-bottom: 4px; font-size: 18px; line-height: 18px; font-weight: 500; }
.unit svg { width: 28px; height: 9px; }
.right { width: 54px; padding-left: 4px; background: #2f2f2f; }
.more::after { content: ""; position: absolute; right: 0; bottom: -1px; border: 5px solid; border-color: transparent #e0e0e0 #e0e0e0 transparent; }
.canvas { flex: 1; min-width: 0; background: #000e21 radial-gradient(circle at 12px 22px, #3d4a5e 1px, transparent 2px) 0 0 / 89px 89px; }
.board { width: 100%; height: 100%; }

/* appearance panel */
.panel { flex: none; width: 274px; display: flex; flex-direction: column; background: #343434; overflow: hidden; font-size: 15px; }
.caption { flex: none; height: 22px; padding: 0 5px; font-size: 15px; line-height: 22px; background: #1f1f1f; }
.tabs { flex: none; z-index: 1; align-self: center; display: flex; width: 222px; height: 27px; margin: 17px 0 -14px; border-radius: 6px; background: #3a3a3a; border: 1px solid #474747; }
.tab { flex: auto; border-radius: 6px; padding: 0 13px; }
.tab.current { background: #6a6a6a; }
.group { flex: none; display: flex; flex-direction: column; justify-content: space-between; height: 709px; margin-left: 1px; padding: 23px 3px 5px; border: 1px solid #484848; border-radius: 6px; background: #3a3a3a; }
.layers { display: grid; grid-auto-rows: 1fr; height: 564px; list-style: none; }
.layers li { display: flex; align-items: center; gap: 8px; padding-left: 21px; }
.layers li.active { padding-left: 0; background: #474747; }
.layers li.active::before { content: ""; width: 0; margin: 0 1px 0 6px; border: 6px solid transparent; border-left-color: #4b3fd0; border-right: 0; box-sizing: content-box; }
.layers button { width: 20px; display: grid; place-items: center; }
.layers svg { width: 18px; height: 12px; }
.layers .chip { width: 21px; height: 16px; }
.fcu { background: #c83434; } .bcu { background: #4d7fc4; } .fadh { background: #840084; } .badh { background: #000084; }
.fpaste { background: #a8958d; } .bpaste { background: #00b0a8; } .fsilk { background: #f2eda1; } .bsilk { background: #e8b2a7; }
.fmask { background: repeating-conic-gradient(#6b2e74 0 25%, #4c2f60 0 50%) 0 0 / 14px 12px; }
.bmask { background: repeating-conic-gradient(#0a8a6e 0 25%, #1a5f50 0 50%) 0 0 / 14px 12px; }
.gray { background: #c2c2c2; } .blue { background: #5994dc; } .mint { background: #b4dbd2; } .gold { background: #d8c852; }
.edge { background: #d0d2cd; } .pink { background: #ff26e2; } .cyan { background: #26e9ff; } .ffab { background: #afafaf; } .bfab { background: #585d84; }
.reveal { display: flex; align-items: center; gap: 2px; padding-left: 15px; color: #707070; }
.reveal svg { width: 8px; height: 12px; }
.views { flex: none; display: flex; flex-direction: column; padding: 6px 9px 11px 10px; font-size: 16px; }
.views label { line-height: 20px; margin-bottom: 2px; }
.views .pick { margin-bottom: 5px; }
.filter { display: grid; grid-template-columns: 131px 1fr; grid-auto-rows: 22px; padding: 6px 0 0 8px; font-size: 16px; white-space: nowrap; }
.filter label { display: flex; align-items: center; gap: 8px; }
input[type="checkbox"] { flex: none; appearance: none; display: grid; place-items: center; width: 18px; height: 18px; border-radius: 4px; background: #5c5c5c; }
input[type="checkbox"]:checked::after { content: ""; width: 6px; height: 11px; margin-bottom: 3px; border: solid #fff; border-width: 0 2px 2px 0; transform: rotate(40deg); }
input[type="checkbox"].accent { background: #1e63d0; }

/* board setup window */
.dialog { position: absolute; left: 320px; right: 311px; top: 178px; bottom: 120px; display: flex; flex-direction: column; border: 1px solid #595c5e; border-radius: 12px; overflow: hidden; background: #2b2f31; color: #e2e4e5; box-shadow: 0 18px 36px rgba(0, 0, 0, .65); }
.titlebar { flex: none; display: grid; grid-template-columns: 1fr auto 1fr; align-items: center; height: 36px; padding: 0 9px 2px; background: #3b3f41; border-bottom: 1px solid #111; }
.titlebar h1 { font-weight: 600; color: #c8cacb; }
.lights { display: flex; gap: 10px; }
.lights button { width: 16px; height: 16px; border-radius: 50%; }
.lights .close { background: #ff5f57; }
.lights .min { background: #5b5f61; }
.lights .max { background: #28c840; }
.pages { flex: 1; min-height: 0; display: flex; }
.tree { flex: none; display: grid; grid-auto-rows: 1fr; width: 236px; height: 690px; padding: 3px 1px 215px 0; background: #1e1e1e; border-right: 1px solid #383b3c; font-size: 16px; }
.tree a { display: flex; align-items: center; padding-left: 44px; color: inherit; text-decoration: none; }
.tree a.branch { padding-left: 6px; gap: 13px; }
.tree svg { width: 12px; height: 8px; }
.tree a.selected { background: #dcdcdc; color: #fff; }
.form { flex: 1; min-width: 0; display: flex; gap: 47px; padding: 0 7px 0 11px; overflow: hidden; }
.rules { flex: 517 1 0; }
.misc { flex: 452 1 0; min-width: 0; }
.col section { border-bottom: 1px solid #45494b; }
.rules section { position: relative; padding: 7px 0 14px; }
.rules .copper { padding: 12px 0 35px; }
.rules h3 { width: 92px; margin-bottom: 5px; text-align: center; }
.rules .silk h3 { margin-bottom: 2px; }
.rule { display: grid; grid-template-columns: 92px 226px 154px 1fr; align-items: center; height: 43px; white-space: nowrap; }
.rule svg { width: 32px; height: 32px; justify-self: center; }
.rule span { padding-left: 9px; }
.form input:not([type="checkbox"]) { width: 154px; height: 28px; padding: 0 5px; background: #36393b; border-bottom: 1px solid #595d5f; outline: none; }
.form input.focused { box-shadow: 0 0 0 3px #3a6d94; }
.rules .marker { position: absolute; left: 0; top: 17px; width: 540px; height: 60px; overflow: visible; pointer-events: none; }
.misc section { padding: 0 6px; }
.misc .arc { padding-top: 13px; padding-bottom: 28px; }
.misc .zone { padding-top: 25px; padding-bottom: 15px; }
.misc .tuning { padding-top: 24px; border: 0; }
.misc p { font-size: 15px; }
.line { display: flex; align-items: center; height: 44px; white-space: nowrap; }
.line.indent { height: 28px; padding-left: 19px; margin: 7px 0 15px; }
.indent label { flex: 1; }
.indent span { padding: 0 0 0 8px; }
.zone h3 { margin-bottom: 4px; }
.line > svg { width: 32px; height: 32px; margin-right: 12px; }
.misc label { display: flex; align-items: center; gap: 8px; white-space: nowrap; }
.tuning label { margin-top: 14px; }
.form .line .small { width: 41px; margin-left: 6px; }
.stepper { display: grid; place-items: center; width: 17px; height: 27px; margin-left: 6px; border-radius: 6px; background: #676a6b; }
.stepper svg { width: 12px; height: 22px; }
.scroll { flex: none; width: 18px; padding: 3px 2px 0 4px; border-left: 1px solid #404446; }
.thumb { height: 598px; border-radius: 6px; background: #8e9193; }
.actions { flex: none; display: flex; align-items: center; gap: 15px; height: 57px; padding: 2px 15px 0 12px; border-top: 1px solid #3f4345; }
.actions button { height: 27px; padding: 0 13px; border-radius: 6px; background: #62666a; white-space: nowrap; }
.actions .wide { width: 110px; }
.actions .push { margin-left: auto; }
.actions .primary { background: #0d63d6; color: #fff; }
```
